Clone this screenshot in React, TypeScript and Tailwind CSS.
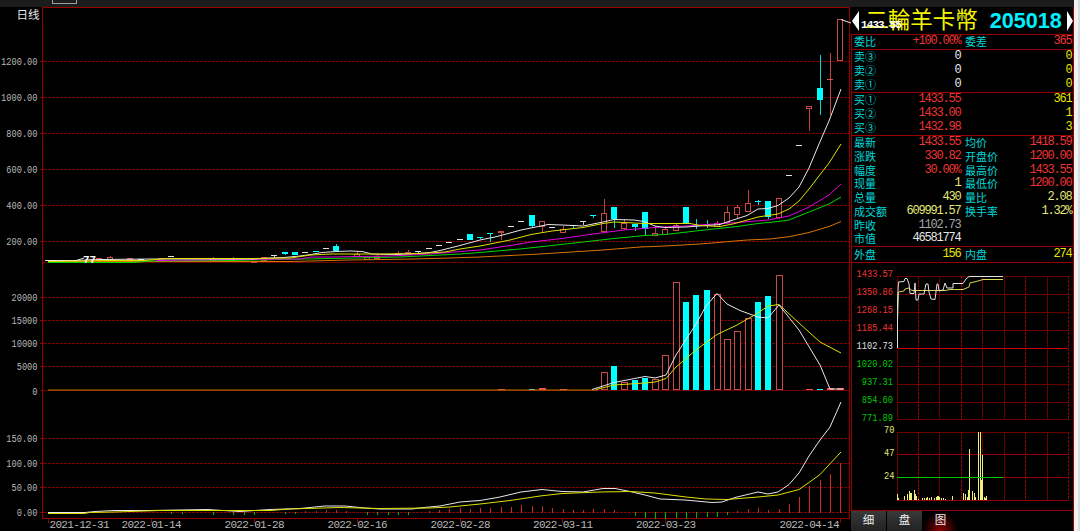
import React from 'react';

type Tone = 'red' | 'yellow' | 'pale' | 'white' | 'gray';

interface Cell {
  label: string;
  value: string;
  tone: Tone;
}

interface Candle {
  i: number;
  kind: 'up' | 'down' | 'flat';
  top: number;
  bottom: number;
  high?: number;
  low?: number;
}

const TONES: Record<Tone, string> = {
  red: 'text-[#f03434]',
  yellow: 'text-[#e6e600]',
  pale: 'text-[#e8e87c]',
  white: 'text-[#e8e8e8]',
  gray: 'text-[#a8a8a8]',
};

const RATIO: Cell[][] = [
  [
    { label: '委比', value: '+100.00%', tone: 'red' },
    { label: '委差', value: '365', tone: 'red' },
  ],
];

const ASKS: Cell[][] = ['卖③', '卖②', '卖①'].map((label) => [
  { label, value: '0', tone: 'white' },
  { label: '', value: '0', tone: 'yellow' },
]);

const BIDS: Cell[][] = [
  [{ label: '买①', value: '1433.55', tone: 'red' }, { label: '', value: '361', tone: 'yellow' }],
  [{ label: '买②', value: '1433.00', tone: 'red' }, { label: '', value: '1', tone: 'yellow' }],
  [{ label: '买③', value: '1432.98', tone: 'red' }, { label: '', value: '3', tone: 'yellow' }],
];

const STATS: Cell[][] = [
  [{ label: '最新', value: '1433.55', tone: 'red' }, { label: '均价', value: '1418.59', tone: 'red' }],
  [{ label: '涨跌', value: '330.82', tone: 'red' }, { label: '开盘价', value: '1200.00', tone: 'red' }],
  [{ label: '幅度', value: '30.00%', tone: 'red' }, { label: '最高价', value: '1433.55', tone: 'red' }],
  [{ label: '现量', value: '1', tone: 'pale' }, { label: '最低价', value: '1200.00', tone: 'red' }],
  [{ label: '总量', value: '430', tone: 'pale' }, { label: '量比', value: '2.08', tone: 'pale' }],
  [{ label: '成交额', value: '609991.57', tone: 'pale' }, { label: '换手率', value: '1.32%', tone: 'pale' }],
  [{ label: '昨收', value: '1102.73', tone: 'gray' }],
  [{ label: '市值', value: '46581774', tone: 'white' }],
];

const SIDES: Cell[][] = [
  [
    { label: '外盘', value: '156', tone: 'yellow' },
    { label: '内盘', value: '274', tone: 'yellow' },
  ],
];

const PRICE_AXIS = [
  { y: 61, text: '1200.00' },
  { y: 97, text: '1000.00' },
  { y: 133, text: '800.00' },
  { y: 169, text: '600.00' },
  { y: 205, text: '400.00' },
  { y: 241, text: '200.00' },
];

const VOLUME_AXIS = [
  { y: 297, text: '20000' },
  { y: 320, text: '15000' },
  { y: 343, text: '10000' },
  { y: 366, text: '5000' },
];

const MACD_AXIS = [
  { y: 438, text: '150.00' },
  { y: 463, text: '100.00' },
  { y: 487, text: '50.00' },
  { y: 512, text: '0.00' },
];

const DATES = [
  { x: 49.5, text: '2021-12-31', tick: 48 },
  { x: 121.5, text: '2022-01-14', tick: 151 },
  { x: 224.5, text: '2022-01-28', tick: 254 },
  { x: 327.5, text: '2022-02-16', tick: 357 },
  { x: 430.5, text: '2022-02-28', tick: 460 },
  { x: 533, text: '2022-03-11', tick: 562 },
  { x: 636, text: '2022-03-23', tick: 665 },
  { x: 779.5, text: '2022-04-14', tick: 840 },
];

// one trading day every 10.29px, day 0 sits at x = 48
const dayX = (i: number) => Math.round(48 + i * 10.29);

const CANDLES: Candle[] = [
  { i: 2, kind: 'down', top: 262, bottom: 263 },
  { i: 4, kind: 'up', top: 259, bottom: 261 },
  { i: 5, kind: 'up', top: 258, bottom: 260 },
  { i: 6, kind: 'up', top: 257, bottom: 259, high: 256 },
  { i: 8, kind: 'up', top: 258, bottom: 259 },
  { i: 9, kind: 'flat', top: 259, bottom: 259 },
  { i: 11, kind: 'up', top: 258, bottom: 260 },
  { i: 12, kind: 'flat', top: 256, bottom: 256 },
  { i: 13, kind: 'flat', top: 258, bottom: 258 },
  { i: 16, kind: 'up', top: 259, bottom: 260, high: 257 },
  { i: 18, kind: 'up', top: 259, bottom: 260, high: 257 },
  { i: 20, kind: 'up', top: 261, bottom: 262 },
  { i: 21, kind: 'up', top: 257, bottom: 260 },
  { i: 22, kind: 'flat', top: 255, bottom: 255, low: 258 },
  { i: 23, kind: 'down', top: 252, bottom: 254, low: 255 },
  { i: 24, kind: 'down', top: 252, bottom: 255 },
  { i: 25, kind: 'flat', top: 252, bottom: 252 },
  { i: 26, kind: 'down', top: 251, bottom: 252 },
  { i: 27, kind: 'flat', top: 248, bottom: 248 },
  { i: 28, kind: 'down', top: 246, bottom: 251, high: 244 },
  { i: 30, kind: 'up', top: 254, bottom: 256, high: 251 },
  { i: 31, kind: 'up', top: 257, bottom: 259 },
  { i: 32, kind: 'up', top: 256, bottom: 258, high: 255 },
  { i: 34, kind: 'up', top: 253, bottom: 254, high: 251 },
  { i: 35, kind: 'up', top: 252, bottom: 253, high: 250 },
  { i: 36, kind: 'flat', top: 251, bottom: 251, low: 254 },
  { i: 37, kind: 'flat', top: 248, bottom: 248 },
  { i: 38, kind: 'flat', top: 245, bottom: 245 },
  { i: 39, kind: 'flat', top: 242, bottom: 242 },
  { i: 40, kind: 'flat', top: 239, bottom: 239 },
  { i: 41, kind: 'down', top: 234, bottom: 240 },
  { i: 42, kind: 'down', top: 237, bottom: 238, low: 239 },
  { i: 43, kind: 'down', top: 233, bottom: 234, low: 242 },
  { i: 44, kind: 'up', top: 231, bottom: 232, low: 240 },
  { i: 45, kind: 'flat', top: 226, bottom: 226 },
  { i: 46, kind: 'flat', top: 221, bottom: 221 },
  { i: 47, kind: 'down', top: 215, bottom: 226, low: 228 },
  { i: 48, kind: 'up', top: 221, bottom: 226, low: 232 },
  { i: 49, kind: 'flat', top: 227, bottom: 227 },
  { i: 50, kind: 'up', top: 229, bottom: 232, high: 226 },
  { i: 51, kind: 'down', top: 225, bottom: 226, low: 228 },
  { i: 52, kind: 'flat', top: 221, bottom: 221, low: 225 },
  { i: 53, kind: 'down', top: 215, bottom: 216, low: 218 },
  { i: 54, kind: 'up', top: 213, bottom: 231, high: 199 },
  { i: 55, kind: 'down', top: 207, bottom: 219, low: 228 },
  { i: 56, kind: 'up', top: 223, bottom: 228, high: 219, low: 230 },
  { i: 57, kind: 'down', top: 224, bottom: 227, low: 231 },
  { i: 58, kind: 'down', top: 212, bottom: 229, low: 235 },
  { i: 59, kind: 'up', top: 233, bottom: 235, high: 226 },
  { i: 60, kind: 'up', top: 229, bottom: 234, high: 226 },
  { i: 61, kind: 'up', top: 225, bottom: 230, high: 223 },
  { i: 62, kind: 'down', top: 207, bottom: 223 },
  { i: 63, kind: 'down', top: 225, bottom: 226, high: 219, low: 229 },
  { i: 64, kind: 'down', top: 224, bottom: 225, high: 220, low: 228 },
  { i: 65, kind: 'up', top: 223, bottom: 226, high: 221 },
  { i: 66, kind: 'up', top: 212, bottom: 222, high: 206, low: 224 },
  { i: 67, kind: 'up', top: 207, bottom: 214, high: 205, low: 218 },
  { i: 68, kind: 'up', top: 203, bottom: 211, high: 190 },
  { i: 69, kind: 'down', top: 201, bottom: 202, high: 200, low: 205 },
  { i: 70, kind: 'down', top: 201, bottom: 217, low: 219 },
  { i: 71, kind: 'up', top: 198, bottom: 217, low: 219 },
  { i: 72, kind: 'flat', top: 175, bottom: 175 },
  { i: 73, kind: 'flat', top: 145, bottom: 145 },
  { i: 74, kind: 'up', top: 106, bottom: 108, low: 131 },
  { i: 75, kind: 'down', top: 88, bottom: 100, high: 55, low: 115 },
  { i: 76, kind: 'up', top: 79, bottom: 79, high: 53, low: 115 },
  { i: 77, kind: 'up', top: 19, bottom: 60 },
];

const VOLUMES: { i: number; up: boolean; top: number }[] = [
  { i: 44, up: true, top: 389 },
  { i: 47, up: false, top: 389 },
  { i: 48, up: true, top: 388 },
  { i: 50, up: true, top: 389 },
  { i: 54, up: true, top: 372 },
  { i: 55, up: false, top: 366 },
  { i: 56, up: true, top: 382 },
  { i: 57, up: false, top: 380 },
  { i: 58, up: false, top: 378 },
  { i: 59, up: true, top: 379 },
  { i: 60, up: true, top: 355 },
  { i: 61, up: true, top: 282 },
  { i: 62, up: false, top: 302 },
  { i: 63, up: false, top: 295 },
  { i: 64, up: false, top: 290 },
  { i: 65, up: true, top: 294 },
  { i: 66, up: true, top: 339 },
  { i: 67, up: true, top: 331 },
  { i: 68, up: true, top: 318 },
  { i: 69, up: false, top: 302 },
  { i: 70, up: false, top: 296 },
  { i: 71, up: true, top: 275 },
  { i: 74, up: true, top: 389 },
  { i: 75, up: false, top: 389 },
  { i: 76, up: true, top: 388 },
  { i: 77, up: true, top: 388 },
];

// [day, end of the bar]; ends below 512 hang under the zero line
const MACD_BARS: [number, number][] = [
  [12, 513], [13, 513], [16, 514], [18, 514], [19, 514], [20, 514], [23, 513], [24, 513],
  [25, 511], [26, 511], [27, 510], [28, 510], [29, 511], [31, 514], [32, 514], [33, 514], [34, 514], [35, 514],
  [37, 511], [38, 510], [39, 509], [40, 508], [41, 509], [42, 508], [43, 508], [44, 507], [45, 507],
  [46, 505], [47, 506], [48, 506], [49, 508], [50, 509], [51, 510], [52, 510], [53, 509], [54, 509],
  [55, 510], [57, 515], [58, 517], [59, 518], [60, 518], [61, 517], [62, 518], [63, 517], [64, 516],
  [65, 516], [66, 514], [67, 511], [68, 509], [69, 508], [70, 510], [71, 509], [72, 504], [73, 497],
  [74, 486], [75, 480], [76, 474], [77, 463],
];

const PRICE_LINES = [
  {
    color: '#d87400',
    points: '48,261.5 290,261.5 350,260 414,259 450,258 480,257 540,254 603,250 640,247 665,246 700,244 747,240 770,239 790,236.5 809,232.5 829,226.5 841,221.5',
  },
  {
    color: '#00d800',
    points: '48,262.5 135,262.5 150,261 230,260.5 330,258.5 400,257 440,255 460,254 480,252.5 520,249 552,245.5 583,242 614,238.5 645,235.5 665,234.5 700,230.5 737,226.5 758,223.5 778,221.5 789,220 809,212 829,204 841,197',
  },
  {
    color: '#e000e0',
    points: '156,260.5 230,259.5 300,259 311,257 330,257 390,256 430,254 460,251.5 480,250 510,245.5 531,242 562,238.5 593,234 624,230 655,227.5 686,226 706,224.5 737,222.5 768,220 789,216 809,207 829,195 841,184',
  },
  {
    color: '#e8e8e8',
    points: '45,260.5 75,260.5 100,259.5 150,259 254,259 270,258 284,257.5 300,256 311,254.5 322,252.5 336,251.5 350,251 362,251.5 372,254 390,254.5 410,254 430,252.5 440,250.5 460,245.5 480,240 495,237 510,233 521,230 531,228 548,224.5 562,225 583,226 593,224 603,222 614,219.5 634,220 644,221.5 655,226 665,227.5 686,227 706,225.5 720,224.5 727,222 747,215.5 758,209 768,208.5 778,205.5 789,198 799,187 809,168 819,144 829,121 841,89',
  },
  {
    color: '#e0e000',
    points: '48,261.5 104,260.5 145,260.5 166,258.5 254,258.5 290,258 311,255 331,254 380,254 420,253.5 445,252 460,249 480,246 510,240 531,234.5 552,231 583,227.5 603,223.5 614,222 644,223.5 690,223.5 700,225.5 720,226.5 735,223.5 758,217 778,214 789,209 799,201 809,189 829,163 841,144',
  },
];

const VOLUME_LINES = [
  {
    color: '#e0e000',
    points: '596,389.5 614,385 645,383 655,382 666,378.5 676,367 696,350 717,334.5 737,325 758,313 768,306 779,304.5 799,323 820,342 841,353',
  },
  {
    color: '#e8e8e8',
    points: '592,389.5 614,382.5 645,376.5 655,378 666,375 676,355 696,324 706,306 717,293.5 727,304 740,310.5 758,317 768,318 779,305 799,330 820,365 830,389 843,389',
  },
];

const MACD_LINES = [
  {
    color: '#e8e8e8',
    points: '48,512.5 85,512.5 95,511.5 115,510.5 150,510.5 207,509.5 240,511.5 270,509.5 300,508.5 325,506 345,506 365,508 380,509 412,509 424,507.5 440,506 460,502 480,500.5 500,497 521,492 542,489.5 562,491.5 583,492 603,488.5 615,488.5 630,491.5 645,495 660,499 685,500 712,502.5 722,502 735,497.5 758,492 768,494 778,492 789,484.5 799,473 809,456 820,440 830,427 841,402',
  },
  {
    color: '#e0e000',
    points: '48,513.5 84,513.5 90,512.5 115,512 160,510.5 270,510.5 290,509 340,507.5 380,508.5 430,508 450,507 480,504 510,500.5 540,496 562,493.5 600,492 630,491.5 655,493 686,497 706,499 727,499.5 758,497 778,495 799,489.5 809,482.5 820,474.5 841,452',
  },
];

const INTRADAY_AXIS = [
  { y: 276, label: 273, text: '1433.57', color: '#f03434' },
  { y: 294, label: 291, text: '1350.86', color: '#f03434' },
  { y: 312, label: 309, text: '1268.15', color: '#f03434' },
  { y: 330, label: 327, text: '1185.44', color: '#f03434' },
  { y: 348, label: 345, text: '1102.73', color: '#e0e0e0' },
  { y: 366, label: 363, text: '1020.02', color: '#00c800' },
  { y: 384, label: 381, text: '937.31', color: '#00c800' },
  { y: 402, label: 399, text: '854.60', color: '#00c800' },
  { y: 419, label: 417, text: '771.89', color: '#00c800' },
];

const INTRADAY_COLS = [
  { x: 897, dashed: false },
  { x: 918, dashed: true },
  { x: 939, dashed: false },
  { x: 961, dashed: true },
  { x: 982, dashed: false },
  { x: 1004, dashed: false },
  { x: 1025, dashed: true },
  { x: 1047, dashed: false },
  { x: 1068, dashed: true },
];

const INTRADAY_VOLUME: [number, number][] = [
  [897, 494], [898, 498], [904, 496], [907, 494], [909, 491], [910, 493], [911, 493], [914, 490], [915, 494],
  [916, 496], [918, 499], [922, 498], [924, 498], [926, 498], [927, 497], [929, 498], [931, 497], [934, 498],
  [936, 497], [937, 496], [938, 496], [939, 497], [941, 498], [943, 498], [945, 499], [952, 496], [963, 493],
  [965, 494], [967, 497], [968, 490], [969, 449], [972, 491], [974, 493], [975, 497], [978, 432], [980, 432],
  [981, 480], [982, 455], [984, 497], [985, 498], [986, 496],
];

const MONO = "'Liberation Mono', monospace";

const AxisText: React.FC<{ x: number; y: number; text: string; color?: string }> = ({
  x,
  y,
  text,
  color = '#b8b8b8',
}) => (
  <text
    x={x}
    y={y + 3.5}
    textAnchor="end"
    textLength={text.length * 5.2}
    lengthAdjust="spacingAndGlyphs"
    fontFamily={MONO}
    fontSize={10.5}
    fill={color}
  >
    {text}
  </text>
);

const DashedLine: React.FC<{ y: number }> = ({ y }) => (
  <g stroke="#960000" shapeRendering="crispEdges">
    <path d={`M40 ${y + 0.5}H44`} />
    <path d={`M44 ${y + 0.5}H849`} strokeDasharray="3 1" opacity={0.85} />
  </g>
);

const CandleMark: React.FC<{ candle: Candle }> = ({ candle }) => {
  const { i, kind, top, bottom, high = top, low = bottom } = candle;
  const x = dayX(i);
  const color = kind === 'up' ? '#e05050' : kind === 'down' ? '#00ffff' : '#e0e0e0';

  return (
    <g shapeRendering="crispEdges">
      {high < top && <rect x={x} y={high} width={1} height={top - high} fill={color} opacity={0.85} />}
      {low > bottom && <rect x={x} y={bottom} width={1} height={low - bottom} fill={color} opacity={0.85} />}
      {kind === 'up' && bottom > top ? (
        <rect x={x - 2.5} y={top + 0.5} width={5} height={bottom - top} fill="#000" stroke="#c84a4a" />
      ) : (
        <rect x={x - 3} y={top} width={6} height={Math.max(1, bottom - top)} fill={color} />
      )}
    </g>
  );
};

const HistoryChart: React.FC = () => {
  return (
    <svg className="block h-[524px] w-[851px] shrink-0" viewBox="0 7 851 524">
      {[...PRICE_AXIS, ...VOLUME_AXIS, ...MACD_AXIS].map((row) => (
        <g key={row.y}>
          <DashedLine y={row.y} />
          <AxisText x={37.5} y={row.y + 0.5} text={row.text} />
        </g>
      ))}
      <AxisText x={37.5} y={391} text="0" />
      <text x={16.5} y={18.5} fontFamily="'Noto Sans CJK SC', sans-serif" fontSize={11.5} fill="#e8e8e8">
        日线
      </text>

      {/* Frame */}
      <g stroke="#960000" fill="none" shapeRendering="crispEdges">
        <path d="M42.5 7.5H849.5V518.5H42.5Z" />
        <path d="M42 262.5H849M40 390.5H849" opacity={0.75} />
        {DATES.map((d) => (
          <path key={d.tick} d={`M${d.tick + 0.5} 518V523`} />
        ))}
      </g>

      {/* Price */}
      {CANDLES.map((c) => (
        <CandleMark key={c.i} candle={c} />
      ))}
      {PRICE_LINES.map((l) => (
        <polyline key={l.color} points={l.points} fill="none" stroke={l.color} />
      ))}
      <path d="M75 261L84 258M841 19.5L851 23" stroke="#e8e8e8" />
      <text x={83} y={263} fontFamily={MONO} fontSize={11} fontWeight={700} fill="#fff">
        77
      </text>

      {/* Volume */}
      {VOLUMES.map(({ i, up, top }) =>
        up && top < 387 ? (
          <rect
            key={i}
            x={dayX(i) - 2.5}
            y={top + 0.5}
            width={6}
            height={389 - top}
            fill="#000"
            stroke="#c84a4a"
            shapeRendering="crispEdges"
          />
        ) : (
          <rect
            key={i}
            x={dayX(i) - 3}
            y={top}
            width={up ? 7 : 6}
            height={390 - top}
            fill={up ? '#f05050' : '#00ffff'}
            shapeRendering="crispEdges"
          />
        ),
      )}
      <path d="M48 390H598" stroke="#c87800" />
      {VOLUME_LINES.map((l) => (
        <polyline key={l.color} points={l.points} fill="none" stroke={l.color} />
      ))}

      {/* MACD */}
      {MACD_BARS.map(([i, end]) => (
        <rect
          key={i}
          x={dayX(i)}
          y={Math.min(end, 512)}
          width={1}
          height={Math.abs(512 - end) + 1}
          fill={end > 512 ? '#00b400' : '#d02828'}
          shapeRendering="crispEdges"
        />
      ))}
      {MACD_LINES.map((l) => (
        <polyline key={l.color} points={l.points} fill="none" stroke={l.color} />
      ))}

      {DATES.map((d) => (
        <text key={d.text} x={d.x} y={527.5} textLength={60} fontFamily={MONO} fontSize={11} fill="#b8b8b8">
          {d.text}
        </text>
      ))}
    </svg>
  );
};

const Section: React.FC<{ rows: Cell[][]; className: string }> = ({ rows, className }) => (
  <div className={`flex flex-col justify-center border-t border-[#960000] ${className}`}>
    {rows.map((row) => (
      <div
        key={row[0].label}
        className="grid h-[13.75px] grid-cols-[109px_109px] gap-x-[2px] pl-[2px] leading-[13px]"
      >
        {row.map((cell, n) => (
          <div key={n} className="flex justify-between whitespace-nowrap">
            <span className="font-['Noto_Sans_CJK_SC',sans-serif] text-[11px] text-[#00d8d8]">{cell.label}</span>
            <span
              className={`pr-[2.5px] font-['Liberation_Mono',monospace] text-[12px] tracking-[-1.2px] ${TONES[cell.tone]}`}
            >
              {cell.value}
            </span>
          </div>
        ))}
      </div>
    ))}
  </div>
);

const IntradayChart: React.FC = () => {
  return (
    <div className="border-t border-[#960000]">
      <svg className="block h-[247px] w-[221px]" viewBox="852 263 221 247">
        <g fill="none" shapeRendering="crispEdges">
          {INTRADAY_AXIS.map((row) => (
            <path key={row.y} d={`M897 ${row.y + 0.5}H1069`} stroke={row.y === 348 ? '#c80000' : '#6c0000'} />
          ))}
          {INTRADAY_COLS.map((col) => (
            <path
              key={col.x}
              d={`M${col.x + 0.5} 276V420M${col.x + 0.5} 432V501`}
              stroke={col.dashed ? '#960000' : '#6c0000'}
              strokeDasharray={col.dashed ? '3 1' : undefined}
            />
          ))}
          <path d="M897 432.5H1069" stroke="#6c0000" />
          <path d="M897 454.5H1069M897 477.5H1069M897 500.5H1069" stroke="#960000" />
        </g>

        {INTRADAY_AXIS.map((row) => (
          <AxisText key={row.text} x={893} y={row.label + 0.5} text={row.text} color={row.color} />
        ))}
        <AxisText x={894.5} y={429.5} text="70" color="#e8e87c" />
        <AxisText x={894.5} y={452} text="47" color="#e8e87c" />
        <AxisText x={894.5} y={475} text="24" color="#e8e87c" />

        <polyline
          points="897.5,321 898.5,292 904,291 905,289 909,288 912,290.5 945,290.5 950,289.5 963,289.5 969,287 970,283 978,281 983,279.5 1003,279.5"
          fill="none"
          stroke="#d8d850"
        />
        <polyline
          points="897.5,348 897.5,300 898.5,282 904,281.5 905,278.5 907,278.5 909,284 910,293.5 914,293.5 915,283 916,300 918,300 919,294 924,294 926,284 928,284 929,292 931,299 935,299.5 937,284 938,284 939,291 943,290 945,283 947,288 953,288 953,283.5 963,283.5 966,279 969,276.5 1003,276.5"
          fill="none"
          stroke="#e0e0e0"
        />

        {INTRADAY_VOLUME.map(([x, top]) => (
          <rect key={x} x={x} y={top} width={1} height={500 - top} fill="#f0f078" shapeRendering="crispEdges" />
        ))}
        <path d="M897 477.5H1003" stroke="#00c800" shapeRendering="crispEdges" />
      </svg>
    </div>
  );
};

const Header: React.FC = () => (
  <div className="relative flex h-[27px] items-center justify-between pl-px">
    <svg className="h-[20px] w-[7px]" viewBox="0 0 7 20">
      <path d="M7 0V20L0 10Z" fill="#fff" />
    </svg>
    <div className="flex items-center gap-[12px] whitespace-nowrap pl-px leading-[27px]">
      <h1 className="font-['Noto_Sans_CJK_TC',sans-serif] text-[22.5px] leading-[23px] text-[#f4f400]">
        <span className="block pb-[4px]">二輪羊卡幣</span>
      </h1>
      <span className="font-['Liberation_Sans',Arial,sans-serif] text-[21.6px] font-bold text-[#00f0ff]">205018</span>
    </div>
    <svg className="h-[20px] w-[6px]" viewBox="0 0 6 20">
      <path d="M0 0V20L6 10Z" fill="#fff" />
    </svg>
    {/* Latest high, overlapping the title */}
    <span className="absolute left-[10px] top-[12px] font-['Liberation_Mono',monospace] text-[11px] font-bold leading-[12px] tracking-[-0.9px] text-white">
      1433.55
    </span>
  </div>
);

const Tabs: React.FC = () => (
  <div className="flex h-[21px] gap-px border-t border-[#960000] font-['Noto_Sans_CJK_SC',sans-serif] text-[11.5px] leading-[17px] text-[#f0f0f0]">
    <button className="w-[35px] bg-linear-to-b from-[#3a3a3a] to-[#222222] pb-[3px] text-center">细</button>
    <button className="w-[35px] bg-linear-to-b from-[#3a3a3a] to-[#222222] pb-[3px] text-center">盘</button>
    <button className="w-[35px] bg-[radial-gradient(ellipse_at_50%_100%,#8c0000_0%,#000_72%)] pb-[3px] text-center">
      图
    </button>
  </div>
);

const App: React.FC = () => {
  return (
    <div className="flex h-[531px] w-[1080px] overflow-hidden bg-black">
      <div className="flex w-[1074px] flex-col">
        <div className="h-[7px] shrink-0 bg-[#1c1c1c] pl-[52px]">
          <div className="h-[4px] w-[25px] border border-t-0 border-[#a0a0a0] bg-[#1c1c1c]"></div>
        </div>
        <div className="flex">
          <HistoryChart />
          <div className="flex h-[524px] w-[223px] flex-col border-r border-[#960000]">
            <Header />
            <div className="flex flex-1 flex-col border-l border-[#960000]">
              <Section rows={RATIO} className="h-[15px]" />
              <Section rows={ASKS} className="h-[43px]" />
              <Section rows={BIDS} className="h-[43px]" />
              <Section rows={STATS} className="h-[111px]" />
              <Section rows={SIDES} className="h-[16px]" />
              <IntradayChart />
            </div>
            <Tabs />
          </div>
        </div>
      </div>
      <div className="w-[6px] border-r-2 border-[#d8dcdc] bg-[#f2f2f2]"></div>
    </div>
  );
};

export default App;
